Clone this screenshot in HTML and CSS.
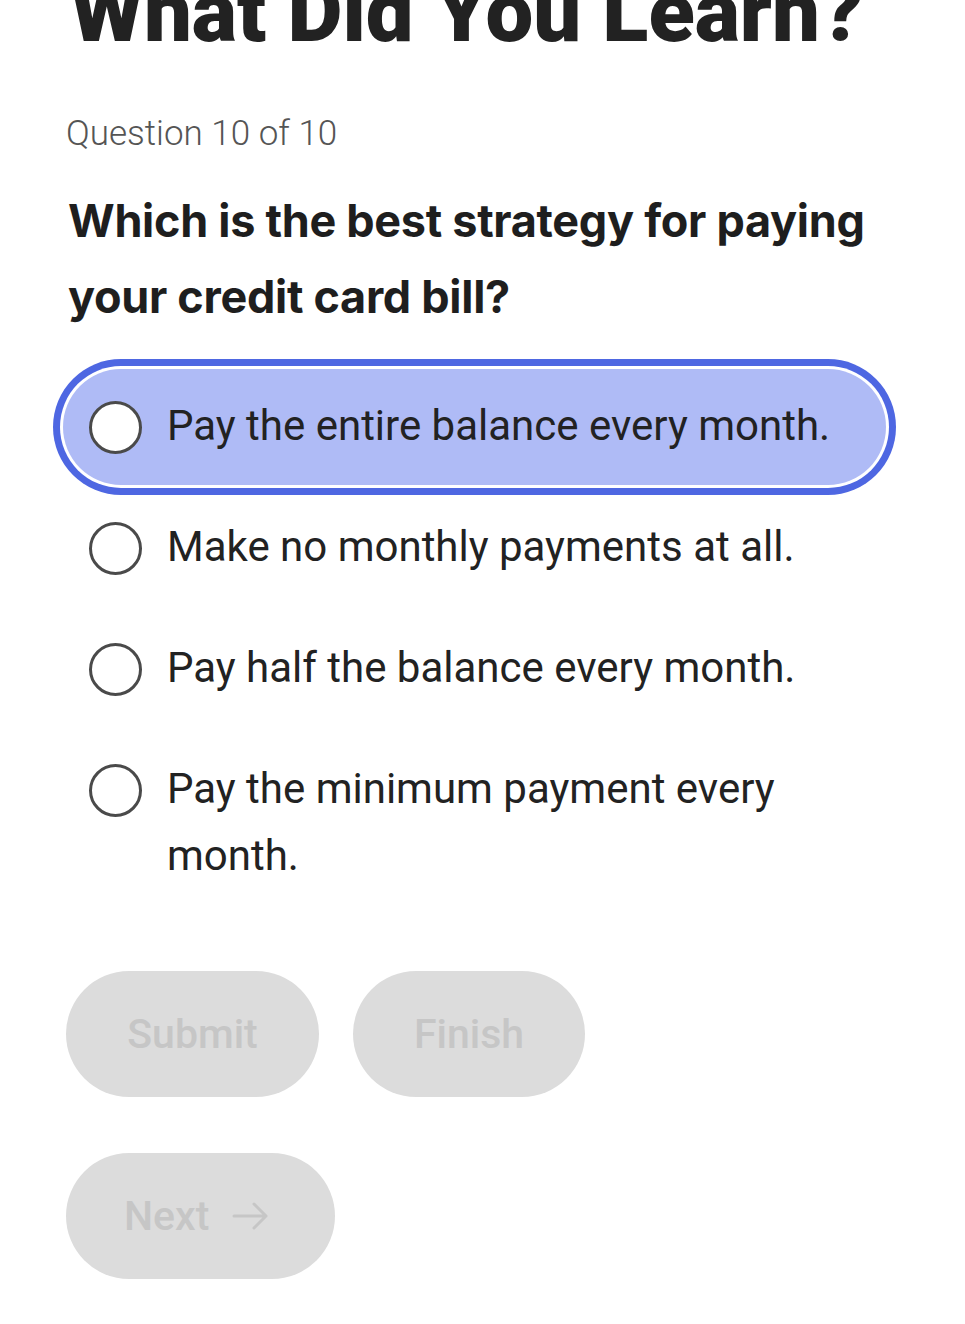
FILE: index.html
```html
<!DOCTYPE html>
<html lang="en">
  <head>
    <meta charset="UTF-8" />
    <meta name="viewport" content="width=device-width, initial-scale=1.0" />
    <title>What Did You Learn?</title>
    <link rel="stylesheet" href="styles.css">
  </head>
  <body>
    <main class="quiz">
      <h1 class="quiz-title">What Did You Learn?</h1>
      <p class="quiz-count">Question 10 of 10</p>
      <h2 class="quiz-question">Which is the best strategy for paying your credit card bill?</h2>

      <form class="quiz-options">
        <label class="option selected">
          <input type="radio" name="answer" />
          <span class="option-text">Pay the entire balance every month.</span>
        </label>
        <label class="option">
          <input type="radio" name="answer" />
          <span class="option-text">Make no monthly payments at all.</span>
        </label>
        <label class="option">
          <input type="radio" name="answer" />
          <span class="option-text">Pay half the balance every month.</span>
        </label>
        <label class="option">
          <input type="radio" name="answer" />
          <span class="option-text">Pay the minimum payment every month.</span>
        </label>
      </form>

      <div class="quiz-actions">
        <button class="btn btn-submit" disabled>Submit</button>
        <button class="btn btn-finish" disabled>Finish</button>
      </div>
      <div class="quiz-actions">
        <button class="btn btn-next" disabled>
          Next
          <svg width="40" height="30" viewBox="0 0 40 30" fill="none" stroke="currentColor" stroke-width="3" stroke-linecap="round" stroke-linejoin="round">
            <path d="M3 15h32M23 3l12 12-12 12" />
          </svg>
        </button>
      </div>
    </main>
  </body>
</html>
```

FILE: styles.css
```css
/* quiz page */
body {
  margin: 0;
  padding: 0;
  background-color: #fff;
  color: #1e1e1e;
  font-family: Roboto, "Liberation Sans", sans-serif;
}

.quiz {
  padding: 0 66px;
}

.quiz-title {
  margin: -39px 0 0 4px;
  font-size: 85px;
  font-weight: 900;
  line-height: 1.2;
  color: #222;
}

.quiz-count {
  margin: 50px 0 0;
  font-size: 35px;
  font-weight: 300;
  color: #555;
}

.quiz-question {
  margin: 29px 0 0 2px;
  max-width: 820px;
  font-family: Inter, Roboto, sans-serif;
  font-size: 45px;
  font-weight: 700;
  line-height: 76px;
  letter-spacing: -0.3px;
  color: #1e1e1e;
}

.quiz-options {
  margin: 34px 0 0 -3px;
  display: flex;
  flex-direction: column;
  gap: 5px;
  width: 823px;
}

.option {
  display: flex;
  align-items: flex-start;
  gap: 25px;
  min-height: 116px;
  box-sizing: border-box;
  padding: 31px 30px 0 26px;
  border-radius: 60px;
  font-size: 42px;
  line-height: 67px;
  color: #222;
  cursor: pointer;
}

.option.selected {
  background-color: #afbbf6;
  box-shadow: 0 0 0 3px #fff, 0 0 0 10px #4e67e2;
}

.option input {
  appearance: none;
  flex: none;
  width: 53px;
  height: 53px;
  margin: 1px 0 0;
  border: 3px solid #4a4a4a;
  border-radius: 50%;
  background-color: #fff;
  box-sizing: border-box;
}

.option-text {
  margin-top: -8px;
}

.quiz-actions {
  display: flex;
  gap: 34px;
  margin-top: 56px;
}

.quiz-actions:first-of-type {
  margin-top: 82px;
}

.btn {
  display: flex;
  align-items: center;
  justify-content: center;
  gap: 22px;
  height: 126px;
  padding: 0 58px;
  border: none;
  border-radius: 63px;
  background-color: #dcdcdc;
  color: #c6c6c6;
  font-family: Roboto, sans-serif;
  font-size: 41px;
  font-weight: 500;
}

.btn-submit {
  width: 253px;
}

.btn-finish {
  width: 232px;
}

.btn-next {
  width: 269px;
  justify-content: flex-start;
}
```
